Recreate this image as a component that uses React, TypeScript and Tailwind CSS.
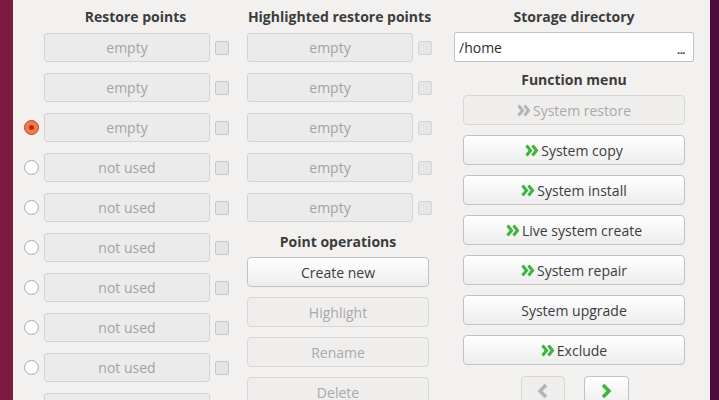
import React from 'react';

function Chevrons({ disabled }: { disabled?: boolean }) {
  const c = disabled ? '#b4b4b4' : '#3db43b';
  return (
    <svg width="14" height="13" viewBox="0 0 14 13" className="shrink-0">
      <path d="M1.5 1.5 L5.5 6.5 L1.5 11.5" fill="none" stroke={c} strokeWidth="3" />
      <path d="M7.5 1.5 L11.5 6.5 L7.5 11.5" fill="none" stroke={c} strokeWidth="3" />
    </svg>
  );
}

function Radio({ checked }: { checked?: boolean }) {
  if (checked) {
    return (
      <div className="w-[15px] h-[15px] rounded-full border border-[#c5461c] bg-[#f07a4a] flex items-center justify-center shrink-0">
        <div className="w-[5px] h-[5px] rounded-full bg-[#a8320f]" />
      </div>
    );
  }
  return <div className="w-[15px] h-[15px] rounded-full border border-[#a9a9a9] bg-white shrink-0" />;
}

function Check({ faded }: { faded?: boolean }) {
  return (
    <div
      className={`w-[14px] h-[14px] rounded-[2px] border shrink-0 ${
        faded ? 'border-[#d4d4d4] bg-[#e6e6e6]' : 'border-[#c6c6c6] bg-[#e4e4e4]'
      }`}
    />
  );
}

function Slot({ label }: { label: string }) {
  return (
    <div className="w-[166px] h-[29px] shrink-0 rounded-[3px] border border-[#d3d3d3] bg-[#ebebeb] flex items-center justify-center text-[#a3a3a3]">
      {label}
    </div>
  );
}

function Btn({ label, disabled, icon }: { label: string; disabled?: boolean; icon?: boolean }) {
  return (
    <div
      className={`h-[30px] shrink-0 rounded-[4px] border flex items-center justify-center gap-[2px] ${
        disabled
          ? 'border-[#d7d7d7] bg-[#efeeed] text-[#a9a9a9]'
          : 'border-[#c2c2c2] bg-gradient-to-b from-white to-[#eeeded] text-[#3c3c3c]'
      }`}
    >
      {icon && <Chevrons disabled={disabled} />}
      <span>{label}</span>
    </div>
  );
}

export default function App() {
  const restore = ['empty', 'empty', 'empty', 'not used', 'not used', 'not used', 'not used', 'not used', 'not used', 'not used'];
  const functions = [
    { label: 'System restore', disabled: true, icon: true },
    { label: 'System copy', icon: true },
    { label: 'System install', icon: true },
    { label: 'Live system create', icon: true },
    { label: 'System repair', icon: true },
    { label: 'System upgrade' },
    { label: 'Exclude', icon: true },
  ];

  return (
    <div
      className="w-[719px] h-[400px] overflow-hidden flex bg-[#7b1a40] text-[14px]"
      style={{ fontFamily: '"Open Sans", sans-serif' }}
    >
      <div className="w-[13px] shrink-0 bg-[#7b1a40]" />
      <div className="w-[697px] shrink-0 bg-[#f2f1f0] flex items-start pl-[11px] pt-[6px]">
        {/* restore points */}
        <div className="w-[204px] flex flex-col shrink-0">
          <div className="h-[21px] shrink-0 pl-[19px] flex items-center justify-center font-bold text-[#3c3c3c]">Restore points</div>
          <div className="mt-[6px] flex flex-col gap-[11px]">
            {restore.map((r, i) => (
              <div key={i} className="flex items-center gap-[5px] shrink-0">
                {i >= 2 ? <Radio checked={i === 2} /> : <div className="w-[15px] shrink-0" />}
                <Slot label={r} />
                <Check />
              </div>
            ))}
          </div>
        </div>

        {/* highlighted */}
        <div className="w-[185px] ml-[19px] flex flex-col shrink-0">
          <div className="h-[21px] shrink-0 flex items-center justify-center font-bold text-[#3c3c3c] whitespace-nowrap">
            Highlighted restore points
          </div>
          <div className="mt-[6px] flex flex-col gap-[11px] shrink-0">
            {[0, 1, 2, 3, 4].map(i => (
              <div key={i} className="flex items-center gap-[5px] shrink-0">
                <Slot label="empty" />
                <Check faded />
              </div>
            ))}
          </div>
          <div className="mt-[9px] h-[21px] w-[182px] shrink-0 flex items-center justify-center font-bold text-[#3c3c3c]">Point operations</div>
          <div className="mt-[5px] w-[182px] flex flex-col gap-[10px] shrink-0">
            <Btn label="Create new" />
            <Btn label="Highlight" disabled />
            <Btn label="Rename" disabled />
            <Btn label="Delete" disabled />
          </div>
        </div>

        {/* right */}
        <div className="w-[240px] ml-[22px] flex flex-col shrink-0">
          <div className="h-[21px] shrink-0 flex items-center justify-center font-bold text-[#3c3c3c]">Storage directory</div>
          <div className="mt-[5px] h-[30px] shrink-0 bg-white border border-[#c3c3c3] rounded-[2px] flex items-center justify-between pl-[4px] pr-[8px] text-[#2e2e2e]">
            <span>/home</span>
            <span className="text-[11px] font-bold tracking-[-0.5px] leading-none pt-[4px]">...</span>
          </div>
          <div className="mt-[7px] h-[21px] shrink-0 flex items-center justify-center font-bold text-[#3c3c3c]">Function menu</div>
          <div className="mt-[5px] mx-[9px] flex flex-col gap-[10px] shrink-0">
            {functions.map(f => (
              <Btn key={f.label} label={f.label} disabled={f.disabled} icon={f.icon} />
            ))}
          </div>
          <div className="mt-[11px] flex justify-center gap-[19px] pl-[1px] shrink-0">
            <div className="w-[44px] h-[30px] rounded-[4px] border border-[#d7d7d7] bg-[#efeeed] flex items-center justify-center">
              <svg width="14" height="16" viewBox="0 0 14 16">
                <path d="M10 2 L4 8 L10 14" fill="none" stroke="#b2b2b2" strokeWidth="3.5" />
              </svg>
            </div>
            <div className="w-[45px] h-[30px] rounded-[4px] border border-[#c2c2c2] bg-gradient-to-b from-white to-[#eeeded] flex items-center justify-center">
              <svg width="14" height="16" viewBox="0 0 14 16">
                <path d="M4 2 L10 8 L4 14" fill="none" stroke="#3db43b" strokeWidth="3.5" />
              </svg>
            </div>
          </div>
        </div>
      </div>
      <div className="flex-1 bg-[#4b0d3b]" />
    </div>
  );
}
